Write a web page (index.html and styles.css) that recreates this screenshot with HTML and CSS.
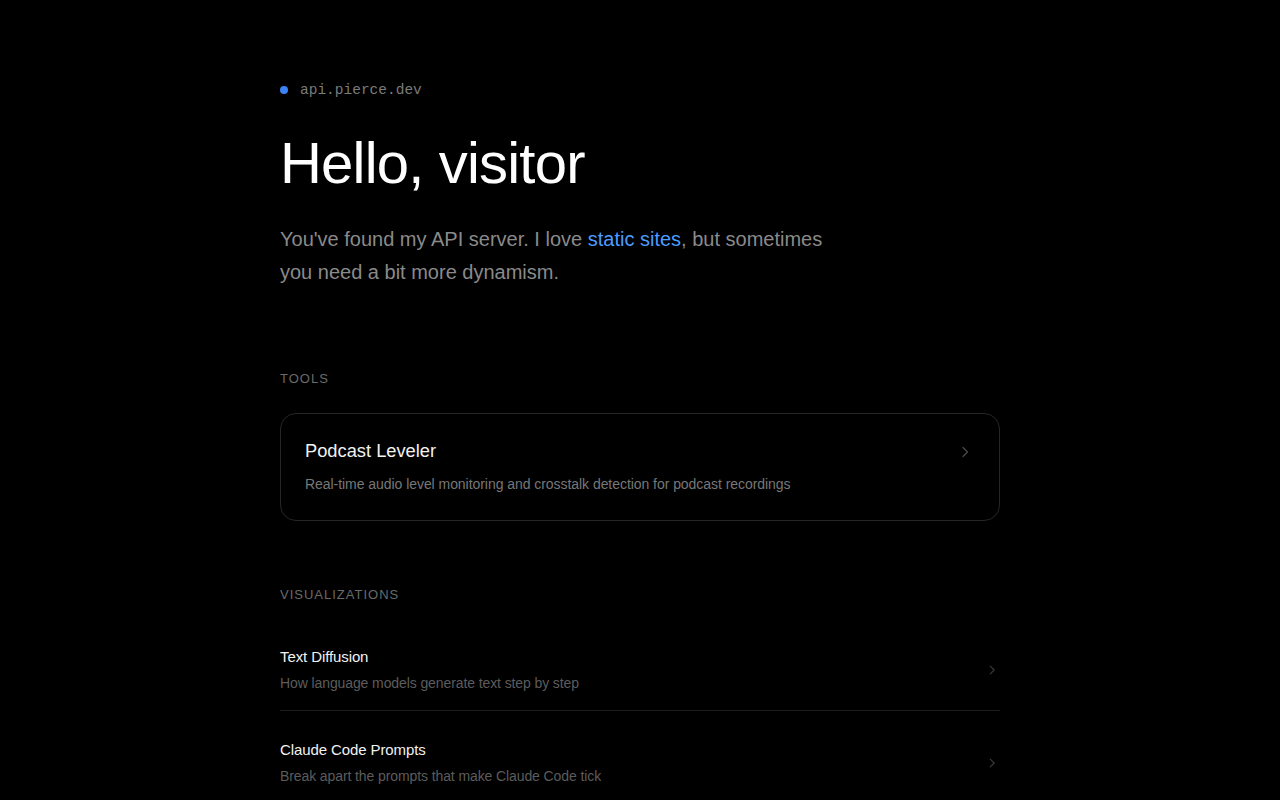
FILE: index.html
```html
<!DOCTYPE html>
<html lang="en">
<head>
<meta charset="utf-8">
<title>api.pierce.dev</title>
<link rel="stylesheet" href="styles.css">
</head>
<body>
<main class="page">
  <header class="hero">
    <div class="host"><span class="dot"></span><span class="host-name">api.pierce.dev</span></div>
    <h1 class="title">Hello, visitor</h1>
    <p class="intro">You've found my API server. I love <a class="link" href="#">static sites</a>, but sometimes you need a bit more dynamism.</p>
  </header>

  <section class="section tools">
    <h2 class="label">Tools</h2>
    <a class="card" href="#">
      <div class="card-body">
        <div class="card-title">Podcast Leveler</div>
        <div class="card-desc">Real-time audio level monitoring and crosstalk detection for podcast recordings</div>
      </div>
      <svg class="chev chev-card" viewBox="0 0 16 16" width="16" height="16"><path d="M6 3.5 10.5 8 6 12.5" fill="none" stroke="currentColor" stroke-width="1.3" stroke-linecap="round" stroke-linejoin="round"/></svg>
    </a>
  </section>

  <section class="section viz">
    <h2 class="label">Visualizations</h2>
    <ul class="list">
      <li class="item">
        <a class="row" href="#">
          <div class="row-body">
            <div class="row-title">Text Diffusion</div>
            <div class="row-desc">How language models generate text step by step</div>
          </div>
          <svg class="chev chev-row" viewBox="0 0 16 16" width="14" height="14"><path d="M6 3.5 10.5 8 6 12.5" fill="none" stroke="currentColor" stroke-width="1.3" stroke-linecap="round" stroke-linejoin="round"/></svg>
        </a>
      </li>
      <li class="item">
        <a class="row" href="#">
          <div class="row-body">
            <div class="row-title">Claude Code Prompts</div>
            <div class="row-desc">Break apart the prompts that make Claude Code tick</div>
          </div>
          <svg class="chev chev-row" viewBox="0 0 16 16" width="14" height="14"><path d="M6 3.5 10.5 8 6 12.5" fill="none" stroke="currentColor" stroke-width="1.3" stroke-linecap="round" stroke-linejoin="round"/></svg>
        </a>
      </li>
    </ul>
  </section>
</main>
</body>
</html>
```

FILE: styles.css
```css
* { box-sizing: border-box; }
html, body { margin: 0; padding: 0; background: #000; }
body {
  font-family: "Liberation Sans", Arial, sans-serif;
  color: #fff;
  -webkit-font-smoothing: antialiased;
}
a { text-decoration: none; color: inherit; }

.page {
  width: 720px;
  margin: 0 auto;
  padding: 80px 0 80px;
}

.host {
  display: flex;
  align-items: center;
  gap: 12px;
  height: 20px;
}
.dot {
  width: 8px;
  height: 8px;
  border-radius: 50%;
  background: #3b82f6;
}
.host-name {
  font-family: "Liberation Mono", monospace;
  font-size: 14.5px;
  color: #7a7a7a;
}

.title {
  margin: 27px 0 0;
  font-size: 58px;
  line-height: 72px;
  font-weight: 400;
  letter-spacing: -0.8px;
  color: #fff;
}

.intro {
  margin: 24px 0 0;
  max-width: 560px;
  font-size: 20px;
  line-height: 33px;
  color: #8a8a8a;
}
.link { color: #4b9cff; }

.section { margin-top: 82px; }
.viz { margin-top: 66px; }

.label {
  margin: 0;
  font-size: 13px;
  line-height: 16px;
  font-weight: 400;
  letter-spacing: 1px;
  text-transform: uppercase;
  color: #6a6a6a;
}

.card {
  margin-top: 26px;
  display: flex;
  align-items: flex-start;
  justify-content: space-between;
  padding: 25px 26px 26px 24px;
  border: 1px solid #262626;
  border-radius: 16px;
}
.card-title {
  font-size: 18.3px;
  line-height: 24px;
  color: #f2f2f2;
}
.card-desc {
  margin-top: 11px;
  font-size: 14px;
  line-height: 20px;
  color: #777;
  letter-spacing: -0.05px;
}
.chev { color: #4a4a4a; flex: none; }
.chev-card { margin-top: 5px; }

.list { list-style: none; margin: 15px 0 0; padding: 0; }
.item { border-bottom: 1px solid #1c1c1c; }
.item:last-child { border-bottom: none; }
.row {
  display: flex;
  align-items: center;
  justify-content: space-between;
  padding: 29px 0 17px;
}
.row-title {
  font-size: 15px;
  line-height: 20px;
  color: #f2f2f2;
  letter-spacing: -0.1px;
}
.row-desc {
  margin-top: 6px;
  font-size: 14px;
  line-height: 20px;
  color: #5c5c5c;
  letter-spacing: -0.1px;
}
.chev-row { color: #3a3a3a; margin-right: 1px; }
```
